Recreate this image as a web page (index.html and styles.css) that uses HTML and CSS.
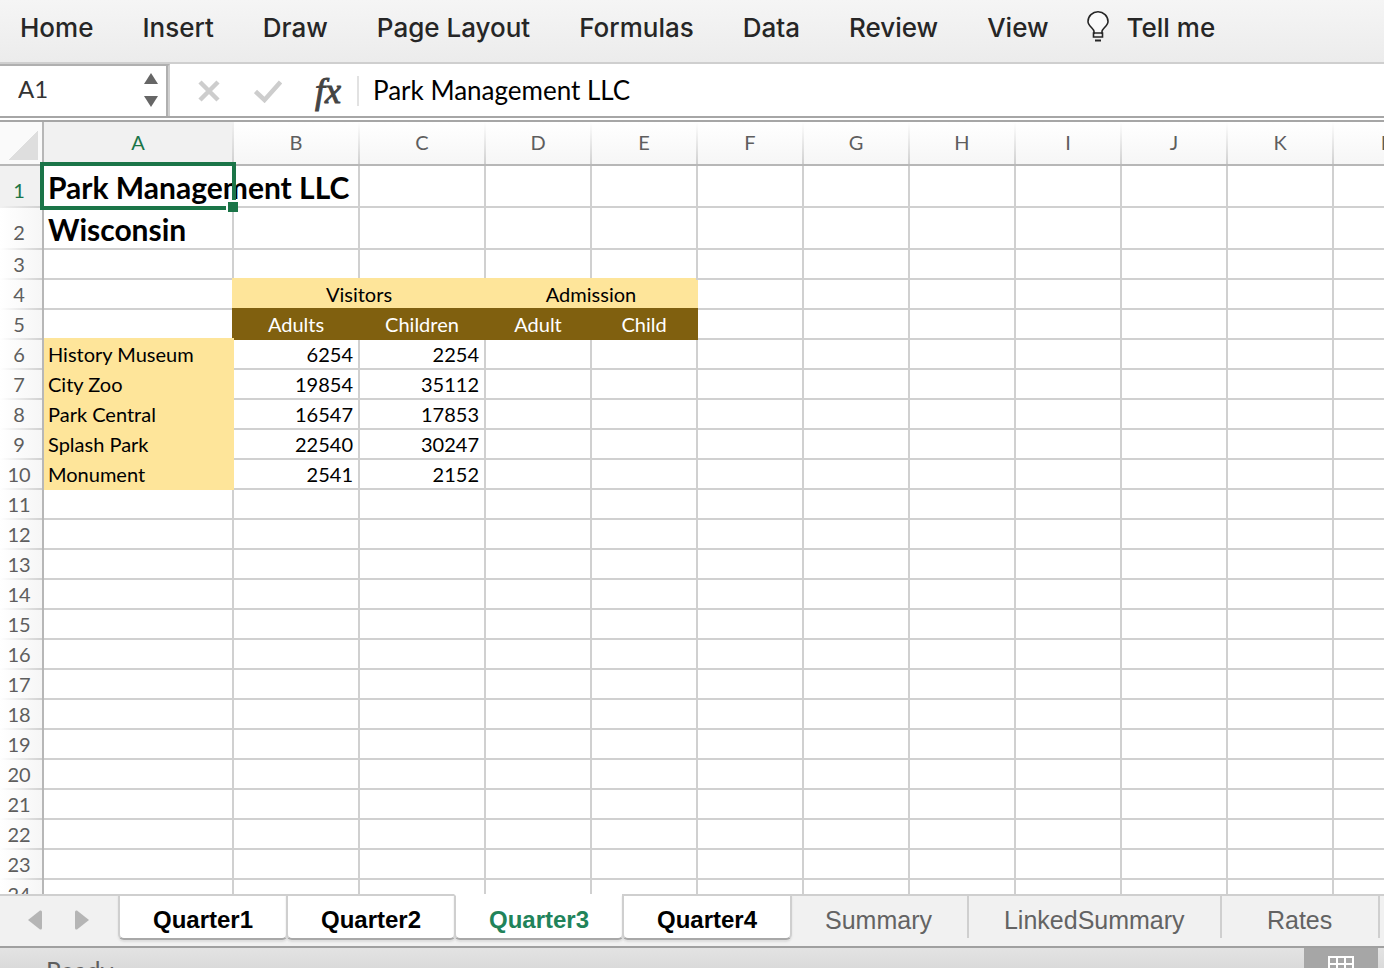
FILE: index.html
```html
<!DOCTYPE html>
<html lang="en">
<head>
  <meta charset="UTF-8" />
  <meta name="viewport" content="width=device-width, initial-scale=1.0"/>
  <title>Park Management LLC</title>
  <link rel="stylesheet" href="styles.css">
</head>
<body>

  <nav class="ribbon">
    <button>Home</button>
    <button>Insert</button>
    <button>Draw</button>
    <button>Page Layout</button>
    <button>Formulas</button>
    <button>Data</button>
    <button>Review</button>
    <button>View</button>
    <button class="tell-me">
      <svg width="22" height="32" viewBox="0 0 22 32" fill="none" stroke="#262626" stroke-width="1.6">
        <path d="M7 23v-2.500C7 17.500 1 15 1 10.500a10 9.700 0 0 1 20 0C21 15 15 17.500 15 20.500V23" fill="#fafafa"/>
        <path d="M6.500 22h9v4h-9z"/>
        <path d="M8 29.500h6" stroke-width="2"/>
      </svg>
      Tell me
    </button>
  </nav>

  <div class="formula-bar">
    <div class="name-box">
      <input type="text" value="A1" aria-label="Name box">
      <div class="spin">
        <button aria-label="Up"><svg width="14" height="11"><path d="M7 0l7 11H0z" fill="#666"/></svg></button>
        <button aria-label="Down"><svg width="14" height="11"><path d="M0 0h14L7 11z" fill="#666"/></svg></button>
      </div>
    </div>
    <div class="formula-buttons">
      <button aria-label="Cancel"><svg width="24" height="24" viewBox="0 0 24 24"><path d="M3 3l18 18M21 3L3 21" stroke="#cdcdcd" stroke-width="4.500"/></svg></button>
      <button aria-label="Enter"><svg width="28" height="24" viewBox="0 0 28 24"><path d="M1.500 12.500l9 8.500L26.500 3" fill="none" stroke="#cdcdcd" stroke-width="4.500"/></svg></button>
      <button class="fx" aria-label="Insert function">fx</button>
    </div>
    <input class="formula" type="text" value="Park Management LLC" aria-label="Formula">
  </div>

  <main class="sheet">
    <table id="grid"></table>
  </main>

  <footer>
    <div class="tabs">
      <div class="tab-nav">
        <button aria-label="Previous sheet"><svg width="15" height="20"><path d="M0 10L12 0.500Q14 0 14 2v16q0 2-2 1.500z" fill="#b5b5b5"/></svg></button>
        <button aria-label="Next sheet"><svg width="15" height="20"><path d="M15 10L3 0.500Q1 0 1 2v16q0 2 2 1.500z" fill="#b5b5b5"/></svg></button>
      </div>
      <button class="tab grouped">Quarter1</button>
      <button class="tab grouped">Quarter2</button>
      <button class="tab grouped active">Quarter3</button>
      <button class="tab grouped">Quarter4</button>
      <button class="tab">Summary</button>
      <button class="tab">LinkedSummary</button>
      <button class="tab">Rates</button>
    </div>
    <div class="status">
      <span>Ready</span>
      <button class="view" aria-label="Normal view">
        <svg width="26" height="22" viewBox="0 0 26 22" fill="none" stroke="#fff" stroke-width="2"><path d="M1 1h24v20H1zM9 1v20M17 1v20M1 8h24M1 15h24"/></svg>
      </button>
    </div>
  </footer>

  <script>
    // [text, class, colspan]
    const cells = {
      A1: ['Park Management LLC', 'title selected'],
      A2: ['Wisconsin', 'title'],
      B4: ['Visitors', 'fill-light', 2],
      D4: ['Admission', 'fill-light', 2],
      B5: ['Adults', 'fill-dark'],
      C5: ['Children', 'fill-dark'],
      D5: ['Adult', 'fill-dark'],
      E5: ['Child', 'fill-dark']
    };
    const visitors = [
      ['History Museum', 6254, 2254],
      ['City Zoo', 19854, 35112],
      ['Park Central', 16547, 17853],
      ['Splash Park', 22540, 30247],
      ['Monument', 2541, 2152]
    ];
    visitors.forEach((v, i) => {
      cells['A' + (i + 6)] = [v[0], 'fill-name'];
      cells['B' + (i + 6)] = [v[1], 'num'];
      cells['C' + (i + 6)] = [v[2], 'num'];
    });

    function drawGrid() {
      // just enough columns and rows to fill the sheet
      const sheet = document.querySelector('.sheet');
      const colCount = Math.min(26, Math.max(5, 3 + Math.ceil((sheet.clientWidth - 486) / 106)));
      const rowCount = Math.max(10, 2 + Math.ceil((sheet.clientHeight - 128) / 30));
      const cols = 'ABCDEFGHIJKLMNOPQRSTUVWXYZ'.slice(0, colCount).split('');

      let html = '<colgroup><col class="col-head"><col class="col-a"><col class="col-wide"><col class="col-wide">';
      html += '<col class="col">'.repeat(cols.length - 3) + '</colgroup>';
      html += '<thead><tr><th class="corner"></th>';
      cols.forEach(c => {
        html += `<th scope="col"${c === 'A' ? ' class="current"' : ''}>${c}</th>`;
      });
      html += '</tr></thead><tbody>';
      for (let r = 1; r <= rowCount; r++) {
        html += `<tr${r < 3 ? ' class="tall"' : ''}><th scope="row"${r === 1 ? ' class="current"' : ''}>${r}</th>`;
        for (let c = 0; c < cols.length; c++) {
          const cell = cells[cols[c] + r];
          if (!cell) {
            html += '<td></td>';
            continue;
          }
          const span = cell[2] || 1;
          html += `<td class="${cell[1]}" colspan="${span}">${cell[0]}</td>`;
          c += span - 1;
        }
        html += '</tr>';
      }
      document.getElementById('grid').innerHTML = html + '</tbody>';
    }

    drawGrid();
    window.addEventListener('resize', drawGrid);
  </script>

</body>
</html>
```

FILE: styles.css
```css
* {
  box-sizing: border-box;
}
body {
  margin: 0;
  height: 100vh;
  display: flex;
  flex-direction: column;
  overflow: hidden;
  background: #fff;
  font-family: Lato, "Open Sans", sans-serif;
}
button,
input {
  margin: 0;
  padding: 0;
  border: 0;
  background: none;
  font: inherit;
  color: inherit;
  outline: none;
}
svg {
  display: block;
}

/* ribbon */
.ribbon {
  flex: none;
  display: flex;
  gap: 49px;
  height: 64px;
  padding: 0 20px 8px;
  border-bottom: 2px solid #cfcfcf;
  background: linear-gradient(#f5f5f5, #ececec);
  font-family: Inter, "Liberation Sans", sans-serif;
  font-size: 26px;
  font-weight: 500;
  color: #262626;
  white-space: nowrap;
}
.tell-me {
  display: flex;
  align-items: center;
  gap: 18px;
  margin-left: -11px;
}

/* formula bar */
.formula-bar {
  flex: none;
  display: flex;
  height: 58px;
  border-bottom: 6px double #a6a6a6;
}
.name-box {
  display: flex;
  align-items: center;
  width: 170px;
  padding: 0 8px 2px 18px;
  border-top: 2px solid #b0b0b0;
  border-right: 2px solid #d0d0d0;
  box-shadow: inset -2px 0 #b0b0b0;
  font-size: 24px;
  color: #333;
}
.name-box input {
  flex: 1;
  min-width: 0;
  padding-bottom: 4px;
}
.spin {
  display: flex;
  flex-direction: column;
  gap: 12px;
  margin-right: 2px;
}
.formula-buttons {
  display: flex;
  align-items: center;
  gap: 33px;
  padding: 2px 16px 0 27px;
}
.fx {
  font-family: "Liberation Serif", serif;
  font-size: 36px;
  font-style: italic;
  line-height: 40px;
  color: #444;
  -webkit-text-stroke: 1px #444;
}
.formula {
  flex: 1;
  min-width: 0;
  margin: 12px 0 10px;
  padding: 0 0 2px 14px;
  border-left: 2px solid #e2e2e2;
  font-size: 26px;
  color: #000;
}

/* grid */
.sheet {
  flex: 1;
  min-height: 0;
  overflow: hidden;
}
table {
  table-layout: fixed;
  width: 0;
  border-collapse: separate;
  border-spacing: 0;
  font-size: 20px;
  line-height: 28px;
}
.col-head { width: 44px; }
.col-a { width: 190px; }
.col-wide { width: 126px; }
.col { width: 106px; }
th {
  padding: 0 2px 2px 0;
  font-weight: normal;
  color: #5e5e5e;
}
thead th {
  height: 44px;
  border-bottom: 2px solid #b7b7b7;
  background: linear-gradient(#fff, #d0d0d0) right / 2px 100% no-repeat, linear-gradient(#fff, #f6f6f6);
}
thead .corner {
  border-right: 2px solid #b7b7b7;
  background: linear-gradient(135deg, transparent 50%, #dedede 50%) 8px 8px / 30px 30px no-repeat, #fafafa;
}
tbody th {
  height: 30px;
  padding-right: 4px;
  border-right: 2px solid #b7b7b7;
  background: linear-gradient(to right, #fff, #d0d0d0) bottom / 100% 2px no-repeat, linear-gradient(to right, #fff, #f6f6f6);
  vertical-align: bottom;
}
thead .current,
tbody .current {
  background-color: #f1f1f1;
  color: #1b7548;
}
thead .current {
  background-image: linear-gradient(#f1f1f1, #d0d0d0);
}
tbody .current {
  background-image: linear-gradient(to right, #f1f1f1, #d0d0d0);
}
td {
  padding: 0 4px;
  border-right: 2px solid #d0d0d0;
  border-bottom: 2px solid #d0d0d0;
  white-space: nowrap;
  vertical-align: bottom;
}
.tall th,
.tall td {
  height: 42px;
}
.tall th {
  padding-bottom: 4px;
}
.title {
  font-size: 30px;
  font-weight: bold;
  line-height: 38px;
}
.num {
  padding-right: 5px;
  text-align: right;
}
.fill-light,
.fill-dark {
  text-align: center;
}
.fill-light {
  border-color: #fee59a;
  background: #fee59a;
  box-shadow: -2px -2px #fee59a;
}
.fill-dark {
  border-color: #80600f;
  background: #80600f;
  box-shadow: -2px -2px #80600f, 0 -2px #80600f;
  color: #fff;
}
.fill-name {
  border-color: #fee59a;
  background: #fee59a;
  box-shadow: 0 -2px #fee59a;
}

/* selection frame and its fill handle */
.selected {
  position: relative;
}
.selected::before {
  content: "";
  position: absolute;
  inset: -4px;
  border: 4px solid #1b7548;
}
.selected::after {
  content: "";
  position: absolute;
  right: -6px;
  bottom: -6px;
  width: 10px;
  height: 10px;
  border: solid #fff;
  border-width: 2px 0 0 2px;
  background: #1b7548;
}

/* sheet tabs */
footer {
  flex: none;
}
.tabs {
  display: flex;
  height: 54px;
  padding-bottom: 6px;
  border-bottom: 2px solid #a0a0a0;
  background: linear-gradient(#cfcfcf, #cfcfcf) top / 100% 2px no-repeat, #f1f1f1;
  font-family: "Liberation Sans", Arial, sans-serif;
  font-size: 25px;
}
.tab-nav {
  display: flex;
  justify-content: center;
  gap: 31px;
  width: 118px;
  padding: 6px 2px 0 0;
}
.tab {
  min-width: 158px;
  margin: 2px 0;
  padding: 6px 35px 0;
  border-right: 2px solid #cfcfcf;
  color: #636363;
}
.grouped {
  width: 170px;
  margin: 0 -2px 0 0;
  padding: 6px 0 0;
  border: 2px solid #cfcfcf;
  border-bottom-color: #a8a8a8;
  border-radius: 0 0 6px 6px;
  background: #fff;
  box-shadow: 0 2px 2px #ddd;
  font-size: 24px;
  font-weight: bold;
  color: #000;
}
.active {
  border-top-color: #fff;
  color: #21835a;
}

/* status bar */
.status {
  display: flex;
  justify-content: space-between;
  height: 20px;
  padding: 0 6px 0 46px;
  overflow: hidden;
  background: linear-gradient(#e3e3e3, #dadada);
  font-size: 25px;
  line-height: 28px;
  color: #5e5e5e;
}
.status span {
  padding-top: 8px;
}
.view {
  display: flex;
  justify-content: center;
  width: 74px;
  height: 40px;
  padding-top: 8px;
  background: #a6a6a6;
}
```
